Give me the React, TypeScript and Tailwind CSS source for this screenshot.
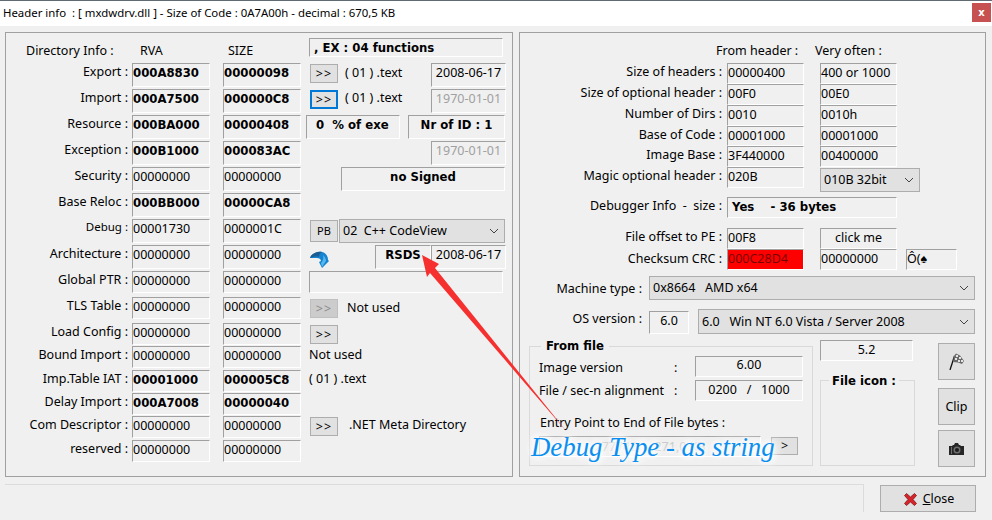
import React from "react";

const sans = "font-['Noto_Sans','Liberation_Sans',sans-serif] text-[12.5px] leading-[16px]";
const bold = "font-['DejaVu_Sans',sans-serif] font-bold text-[11.7px] leading-[16px]";

const Field = ({
  children,
  className = "",
  isBold = false,
}: {
  children?: React.ReactNode;
  className?: string;
  isBold?: boolean;
}) => (
  <div
    className={`shrink-0 border-t border-l border-t-[#a0a0a0] border-l-[#a0a0a0] border-r border-b border-r-white border-b-white whitespace-pre ${
      isBold ? bold : sans
    } ${className}`}
  >
    {children}
  </div>
);

const Btn = ({
  children,
  className = "",
  tone = "normal",
}: {
  children?: React.ReactNode;
  className?: string;
  tone?: "normal" | "focus" | "off";
}) => (
  <button
    className={`flex shrink-0 items-center justify-center ${sans} ${className} ${
      tone === "focus"
        ? "border-2 border-[#0078d7] bg-[#e1e1e1] text-black"
        : tone === "off"
          ? "border border-[#bfbfbf] bg-[#cccccc] text-[#8a8a8a]"
          : "border border-[#adadad] bg-[#e1e1e1] text-black"
    }`}
  >
    {children}
  </button>
);

const Select = ({ text, className = "" }: { text: string; className?: string }) => (
  <div
    className={`flex shrink-0 items-center justify-between border border-[#adadad] bg-[#e1e1e1] pl-[3px] pr-[5px] whitespace-pre ${sans} ${className}`}
  >
    <span>{text}</span>
    <svg width="10" height="6" viewBox="0 0 10 6" fill="none" stroke="#444" strokeWidth="1">
      <path d="M1 1l4 4 4-4" />
    </svg>
  </div>
);

const Row = ({
  label,
  rva,
  size,
  strong = false,
  small = false,
  className,
  children,
}: {
  label: string;
  rva: string;
  size: string;
  strong?: boolean;
  small?: boolean;
  className: string;
  children?: React.ReactNode;
}) => (
  <div className={`flex items-start ${className}`}>
    <div
      className={`w-[122px] shrink-0 pt-px text-right whitespace-pre ${
        small ? "font-['Noto_Sans',sans-serif] text-[11.5px] leading-[14px]" : sans
      }`}
    >
      {label} :
    </div>
    <Field isBold={strong} className="ml-[4px] h-full w-[78px] pt-px">
      {rva}
    </Field>
    <Field isBold={strong} className="ml-[13px] h-full w-[78px] pt-px">
      {size}
    </Field>
    {children}
  </div>
);

const Arrows = ({
  className = "",
  tone = "normal",
}: {
  className?: string;
  tone?: "normal" | "focus" | "off";
}) => (
  <Btn tone={tone} className={`h-[19px] w-[28px] tracking-[1px] ${className}`}>
    &gt;&gt;
  </Btn>
);

const RightRow = ({
  label,
  a,
  b,
  className,
  children,
}: {
  label: string;
  a: string;
  b?: string;
  className: string;
  children?: React.ReactNode;
}) => (
  <div className={`flex items-start ${className}`}>
    <div className={`w-[202px] shrink-0 pt-px text-right whitespace-pre ${sans}`}>{label} :</div>
    <Field className="ml-[5px] h-full w-[77px] pt-px">{a}</Field>
    {b !== undefined && <Field className="ml-[16px] h-full w-[77px] pt-px">{b}</Field>}
    {children}
  </div>
);

export default function App() {
  return (
    <div className="relative h-[520px] w-[992px] overflow-hidden bg-[#f0f0f0] text-black">
      {/* title bar */}
      <div className="flex h-[26px] items-start justify-between border-t border-t-[#5f6a72] bg-white">
        <div className="ml-[3px] mt-[4px] whitespace-pre font-['Noto_Sans',sans-serif] text-[11.4px] leading-[16px]">
          Header info  : [ mxdwdrv.dll ] - Size of Code : 0A7A00h - decimal : 670,5 KB
        </div>
        <div className="mt-[2px] mr-px flex h-[19px] w-[19px] items-center justify-center bg-[#c75050] font-['DejaVu_Sans',sans-serif] text-[10px] font-bold leading-none text-white">
          x
        </div>
      </div>

      <div className="mt-[6px] ml-[5px] flex items-start">
        {/* left panel */}
        <div className="flex h-[445px] w-[508px] shrink-0 flex-col border border-[#a0a0a0] pt-[5px]">
          <div className="flex h-[19px] items-start">
            <div className={`ml-[20px] mt-[5px] w-[114px] shrink-0 ${sans}`}>Directory Info :</div>
            <div className={`mt-[5px] w-[88px] shrink-0 ${sans}`}>RVA</div>
            <div className={`mt-[5px] w-[81px] shrink-0 ${sans}`}>SIZE</div>
            <Field isBold className="h-[19px] w-[194px] pt-px pl-[4px]">
              , EX : 04 functions
            </Field>
          </div>

          <Row label="Export" rva="000A8830" size="00000098" strong className="mt-[6px] h-[24px]">
            <Arrows className="ml-[9px] mt-px" />
            <div className={`ml-[7px] mt-[2px] w-[86px] shrink-0 whitespace-pre ${sans}`}>( 01 ) .text</div>
            <Field className="h-full w-[75px] pt-px text-center">2008-06-17</Field>
          </Row>
          <Row label="Import" rva="000A7500" size="000000C8" strong className="mt-[2px] h-[24px]">
            <Arrows tone="focus" className="ml-[9px] mt-px" />
            <div className={`ml-[7px] mt-px w-[86px] shrink-0 whitespace-pre ${sans}`}>( 01 ) .text</div>
            <Field className="h-full w-[75px] pt-px text-center text-[#a0a0a0]">1970-01-01</Field>
          </Row>
          <Row label="Resource" rva="000BA000" size="00000408" strong className="mt-[2px] h-[24px]">
            <Field isBold className="ml-[5px] h-full w-[94px] pt-px pl-[9px]">
              0  % of exe
            </Field>
            <Field isBold className="ml-[8px] h-full w-[97px] pt-px text-center">
              Nr of ID : 1
            </Field>
          </Row>
          <Row label="Exception" rva="000B1000" size="000083AC" strong className="mt-[2px] h-[24px]">
            <Field className="ml-[130px] h-full w-[75px] pt-px text-center text-[#a0a0a0]">1970-01-01</Field>
          </Row>
          <Row label="Security" rva="00000000" size="00000000" className="mt-[2px] h-[24px]">
            <Field isBold className="ml-[40px] h-full w-[164px] pt-px text-center">
              no Signed
            </Field>
          </Row>
          <Row label="Base Reloc" rva="000BB000" size="00000CA8" strong className="mt-[2px] h-[24px]" />
          <Row label="Debug" rva="00001730" size="0000001C" small className="mt-[2px] h-[24px]">
            <Btn className="ml-[9px] mt-px h-[22px] w-[28px]">
              <span className="text-[11px]">PB</span>
            </Btn>
            <Select text="02  C++ CodeView" className="ml-px h-[24px] w-[166px]" />
          </Row>
          <Row label="Architecture" rva="00000000" size="00000000" className="mt-[2px] h-[24px]">
            <svg className="ml-[8px] mt-[6px] shrink-0" width="21" height="18" viewBox="0 0 21 18">
              <path d="M1 7C2 3 8 0 13 1c4 1 6 4 6 8l1 1-7 7-3-6 2-1c0-2-2-3-4-3-3 0-5 0-7 0z" fill="#1583cf" />
              <path d="M1 7C2 3 8 0 13 1c-2 1-3 3-3 5-3-1-6 0-9 1z" fill="#1b5d92" />
              <path d="M14 4c2 2 3 4 3 6l-4 6-1-4c2-2 3-5 2-8z" fill="#55b8f0" />
            </svg>
            <Field isBold className="ml-[45px] h-full w-[56px] pt-px text-center">
              RSDS
            </Field>
            <Field className="h-full w-[75px] pt-px text-center">2008-06-17</Field>
          </Row>
          <Row label="Global PTR" rva="00000000" size="00000000" className="mt-[2px] h-[22px]">
            <Field className="ml-[8px] h-full w-[194px]" />
          </Row>
          <Row label="TLS Table" rva="00000000" size="00000000" className="mt-[4px] h-[22px]">
            <Arrows tone="off" className="ml-[9px] mt-[2px]" />
            <div className={`ml-[9px] mt-[3px] whitespace-pre ${sans}`}>Not used</div>
          </Row>
          <Row label="Load Config" rva="00000000" size="00000000" className="mt-[4px] h-[22px]">
            <Arrows className="ml-[9px] mt-[2px]" />
          </Row>
          <Row label="Bound Import" rva="00000000" size="00000000" className="mt-px h-[22px]">
            <div className={`ml-[8px] mt-px whitespace-pre ${sans}`}>Not used</div>
          </Row>
          <Row label="Imp.Table IAT" rva="00001000" size="000005C8" strong className="mt-[2px] h-[22px]">
            <div className={`ml-[8px] mt-px whitespace-pre ${sans}`}>( 01 ) .text</div>
          </Row>
          <Row label="Delay Import" rva="000A7008" size="00000040" strong className="mt-px h-[22px]" />
          <Row label="Com Descriptor" rva="00000000" size="00000000" className="mt-px h-[22px]">
            <Arrows className="ml-[9px] mt-px" />
            <div className={`ml-[11px] mt-px whitespace-pre ${sans}`}>.NET Meta Directory</div>
          </Row>
          <Row label="reserved" rva="00000000" size="00000000" className="mt-[2px] h-[22px]" />
        </div>

        {/* right panel */}
        <div className="ml-[6px] flex h-[445px] w-[467px] shrink-0 flex-col border border-[#a0a0a0] pt-[10px]">
          <div className={`flex h-[20px] ${sans}`}>
            <div className="ml-[196px] w-[99px] shrink-0">From header :</div>
            <div>Very often :</div>
          </div>
          <RightRow label="Size of headers" a="00000400" b="400 or 1000" className="h-[21px]" />
          <RightRow label="Size of optional header" a="00F0" b="00E0" className="h-[21px]" />
          <RightRow label="Number of Dirs" a="0010" b="0010h" className="h-[21px]" />
          <RightRow label="Base of Code" a="00001000" b="00001000" className="h-[20px]" />
          <RightRow label="Image Base" a="3F440000" b="00400000" className="h-[21px]" />
          <RightRow label="Magic optional header" a="020B" className="h-[21px]">
            <Select text="010B 32bit" className="ml-[16px] mt-px h-[24px] w-[100px]" />
          </RightRow>
          <div className="mt-[9px] flex h-[21px] items-start">
            <div className={`w-[202px] shrink-0 pt-px text-right whitespace-pre ${sans}`}>Debugger Info  -  size :</div>
            <Field isBold className="ml-[5px] h-full w-[170px] pt-px pl-[4px]">
              Yes    - 36 bytes
            </Field>
          </div>
          <div className="mt-[10px]">
            <RightRow label="File offset to PE" a="00F8" className="h-[21px]">
              <Field className="ml-[16px] h-full w-[77px] pt-px text-center">click me</Field>
            </RightRow>
            <div className="flex h-[21px] items-start">
              <div className={`w-[202px] shrink-0 pt-[2px] text-right whitespace-pre ${sans}`}>Checksum CRC :</div>
              <Field className="ml-[5px] h-full w-[77px] bg-[#ff0000] pt-px text-[#7a0000]">000C28D4</Field>
              <Field className="ml-[16px] h-full w-[77px] pt-px">00000000</Field>
              <Field className="ml-[9px] h-full w-[51px] pt-px">Ô(♠</Field>
            </div>
          </div>
          <div className="mt-[6px] flex h-[24px] items-start">
            <div className={`mt-[5px] w-[122px] shrink-0 text-right whitespace-pre ${sans}`}>Machine type :</div>
            <Select text="0x8664   AMD x64" className="ml-[7px] h-[24px] w-[326px]" />
          </div>
          <div className="mt-[9px] flex h-[25px] items-start">
            <div className={`mt-[2px] w-[122px] shrink-0 text-right whitespace-pre ${sans}`}>OS version :</div>
            <Field className="ml-[7px] mt-[2px] h-[23px] w-[40px] pt-[1px] text-center">6.0</Field>
            <Select text="6.0   Win NT 6.0 Vista / Server 2008" className="ml-[9px] h-[25px] w-[277px]" />
          </div>
          <div className="mt-[6px] ml-[9px] flex items-start">
            {/* from file group */}
            <div className="relative mt-[6px] h-[120px] w-[284px] shrink-0 border border-[#d9d9d9] pt-[9px] pl-[9px]">
              <div className={`absolute -top-[9px] left-[11px] bg-[#f0f0f0] px-[5px] ${bold}`}>From file</div>
              <div className="flex h-[21px] items-start">
                <div className={`mt-[4px] w-[135px] shrink-0 whitespace-pre ${sans}`}>Image version</div>
                <div className={`mt-[4px] w-[21px] shrink-0 ${sans}`}>:</div>
                <Field className="h-full w-[108px] text-center">6.00</Field>
              </div>
              <div className="mt-[3px] flex h-[21px] items-start">
                <div className={`mt-[3px] w-[135px] shrink-0 whitespace-pre ${sans}`}>File / sec-n alignment</div>
                <div className={`mt-[3px] w-[21px] shrink-0 ${sans}`}>:</div>
                <Field className="h-full w-[108px] pt-px text-center">0200   /   1000</Field>
              </div>
              <div className={`ml-px mt-[14px] whitespace-pre ${sans}`}>Entry Point to End of File bytes :</div>
              <div className="mt-[5px] flex h-[21px] items-start">
                <Field className="h-full w-[222px] pt-[2px] text-center text-[#c4c4c4]">277742  -  271,0 KB</Field>
                <Btn className="ml-[10px] mt-px h-[18px] w-[27px]">&gt;</Btn>
              </div>
            </div>
            {/* version + file icon */}
            <div className="ml-[7px] flex w-[95px] shrink-0 flex-col">
              <Field className="h-[21px] w-[93px] pt-px text-center">5.2</Field>
              <div className="relative mt-[19px] h-[86px] w-[95px] border border-[#d9d9d9]">
                <div className={`absolute -top-[8px] left-[8px] bg-[#f0f0f0] px-[3px] ${bold}`}>File icon :</div>
              </div>
            </div>
            {/* buttons */}
            <div className="ml-[23px] mt-[3px] flex w-[37px] shrink-0 flex-col">
              <Btn className="h-[37px] w-[37px]">
                <svg width="16" height="17" viewBox="0 0 16 17">
                  <path d="M1 17L5.500 3" stroke="#111" strokeWidth="1.300" />
                  <path d="M5 3L7 0.500 11 2.500 15 8 13 11 9 9.500 4 9z" fill="#6a6a6a" />
                  <path d="M7 2h2v2H7zM10 4h2v2h-2zM6 5h2v2H6zM9 7h2v2H9zM12 7h2v2h-2z" fill="#e4e4e4" />
                </svg>
              </Btn>
              <Btn className="mt-[8px] h-[37px] w-[37px]">Clip</Btn>
              <Btn className="mt-[5px] h-[37px] w-[37px]">
                <svg width="15" height="14" viewBox="0 0 15 14">
                  <path d="M0 4h3l1-1h1l1-2h3l1 2h1l1 1h3v9H0z" fill="#262626" />
                  <circle cx="8" cy="8" r="3.500" fill="#6f6f6f" />
                  <circle cx="8" cy="8" r="2" fill="#1c1c1c" />
                  <path d="M2 5h1v7H2z" fill="#6f6f6f" />
                </svg>
              </Btn>
            </div>
          </div>
        </div>
      </div>

      {/* footer */}
      <div className="mt-[7px] ml-[5px] flex items-start">
        <div className="h-[28px] w-[859px] shrink-0 border-t border-r border-[#dcdcdc]" />
        <Btn className="ml-[16px] mt-px h-[27px] w-[96px] gap-[6px] pt-px pl-[2px]">
          <svg width="13" height="13" viewBox="0 0 13 13">
            <path
              d="M2.500 0.500L6.500 4 10.500 0.500 12.500 2.500 9 6.500 12.500 10.500 10.500 12.500 6.500 9 2.500 12.500 0.500 10.500 4 6.500 0.500 2.500z"
              fill="#d8232a"
              stroke="#7d1a1e"
              strokeWidth="0.8"
            />
          </svg>
          <span>
            <span className="underline">C</span>lose
          </span>
        </Btn>
      </div>

      {/* annotation drawn over the screenshot */}
      <svg className="pointer-events-none absolute top-0 left-0" width="992" height="520" viewBox="0 0 992 520">
        <path d="M422 255L439 264 435 268 567 432 430 273 427 277z" fill="#f5302e" />
      </svg>
      <div className="absolute top-[430px] left-[531px] whitespace-pre font-['Liberation_Serif',serif] text-[26.8px] italic leading-[34px] text-[#0a8ff0] [text-shadow:0_0_4px_#fff,0_0_8px_#fff,0_0_10px_#fff,0_0_14px_#fff,0_0_18px_#fff]">
        Debug Type - as string
      </div>
    </div>
  );
}
